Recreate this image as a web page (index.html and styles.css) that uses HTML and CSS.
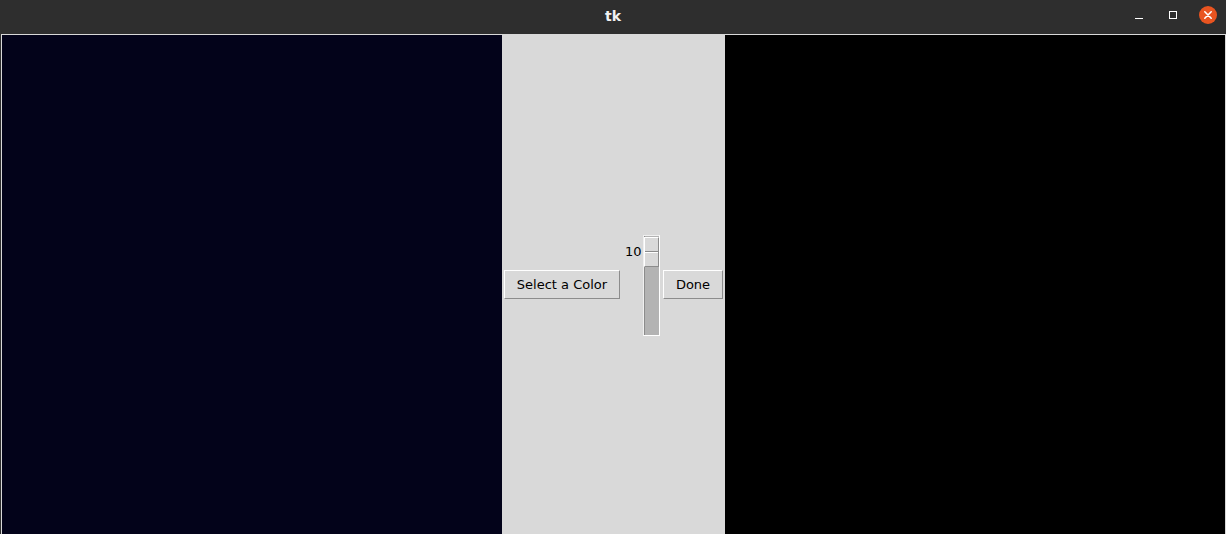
FILE: index.html
```html
<!DOCTYPE html>
<html>
<head>
<meta charset="utf-8">
<link rel="stylesheet" href="styles.css">
</head>
<body>
<div class="window">
  <div class="titlebar">
    <div class="title">tk</div>
    <div class="controls">
      <span class="ctl min"><span class="min-bar"></span></span>
      <span class="ctl max"><span class="max-box"></span></span>
      <span class="ctl close">
        <svg width="18" height="18" viewBox="0 0 18 18"><circle cx="9" cy="9" r="9" fill="#e95420"/><path d="M5.8 5.8 L12.2 12.2 M12.2 5.8 L5.8 12.2" stroke="#fff" stroke-width="1.6" stroke-linecap="round"/></svg>
      </span>
    </div>
  </div>
  <div class="content">
    <div class="canvas canvas-left"></div>
    <div class="middle">
      <button class="btn btn-select">Select a Color</button>
      <div class="scale-group">
        <div class="scale-label">10</div>
        <div class="scale">
          <div class="slider"><div class="slider-line"></div></div>
        </div>
      </div>
      <button class="btn btn-done">Done</button>
    </div>
    <div class="canvas canvas-right"></div>
  </div>
</div>
</body>
</html>
```
FILE: styles.css
```css
html, body {
  margin: 0;
  padding: 0;
  width: 1226px;
  height: 534px;
  overflow: hidden;
  background: #2e2e2e;
}
.window {
  width: 1226px;
  height: 534px;
  display: flex;
  flex-direction: column;
}
.titlebar {
  height: 34px;
  flex: none;
  background: #2e2e2e;
  position: relative;
  display: flex;
  align-items: center;
  justify-content: center;
}
.title {
  color: #f2f2f2;
  font-family: "DejaVu Sans", sans-serif;
  font-weight: bold;
  font-size: 14px;
  margin-top: -3px;
}
.controls {
  position: absolute;
  right: 9px;
  top: 6px;
  display: flex;
  align-items: center;
  height: 18px;
}
.ctl {
  display: flex;
  align-items: center;
  justify-content: center;
}
.min {
  width: 10px;
  height: 18px;
  margin-right: 24px;
}
.min-bar {
  width: 8px;
  height: 1px;
  background: #fff;
  margin-top: 7px;
}
.max {
  width: 10px;
  height: 18px;
  margin-right: 21px;
}
.max-box {
  width: 6px;
  height: 6px;
  border: 1px solid #fff;
}
.close {
  width: 18px;
  height: 18px;
}
.content {
  flex: 1;
  display: flex;
  background: #d9d9d9;
  border-left: 1px solid #2e2e2e;
  padding: 1px 1px 0 1px;
}
.canvas {
  width: 500px;
  height: 499px;
  flex: none;
}
.canvas-left {
  background: #03031a;
}
.canvas-right {
  background: #000;
}
.middle {
  width: 223px;
  flex: none;
  display: flex;
  align-items: center;
  font-family: "DejaVu Sans", sans-serif;
  font-size: 13px;
  color: #000;
}
.btn {
  font-family: "DejaVu Sans", sans-serif;
  font-size: 13px;
  background: #d9d9d9;
  color: #000;
  border: 1px solid;
  border-color: #ffffff #8c8c8c #8c8c8c #ffffff;
  height: 29px;
  padding: 0;
  margin: 0;
  display: flex;
  align-items: center;
  justify-content: center;
}
.btn-select {
  width: 116px;
  margin-left: 2px;
}
.btn-done {
  width: 60px;
  margin-left: 3px;
}
.scale-group {
  display: flex;
  align-items: flex-start;
  margin-left: 5px;
  height: 100px;
}
.scale-label {
  width: 16px;
  margin-top: 10px;
  margin-right: 2px;
  text-align: right;
  line-height: 14px;
}
.scale {
  width: 15px;
  height: 98px;
  border: 1px solid;
  border-color: #f0f0f0 #ffffff #ffffff #f0f0f0;
  background: #b3b3b3;
  box-shadow: inset 1px 0 0 #8c8c8c;
  padding-top: 1px;
  box-sizing: content-box;
}
.slider {
  width: 13px;
  height: 28px;
  background: #d9d9d9;
  border: 1px solid;
  border-color: #ffffff #8c8c8c #8c8c8c #ffffff;
  position: relative;
}
.slider-line {
  position: absolute;
  left: 0;
  right: 0;
  top: 13px;
  height: 1px;
  background: #8c8c8c;
  border-bottom: 1px solid #fff;
}
```
